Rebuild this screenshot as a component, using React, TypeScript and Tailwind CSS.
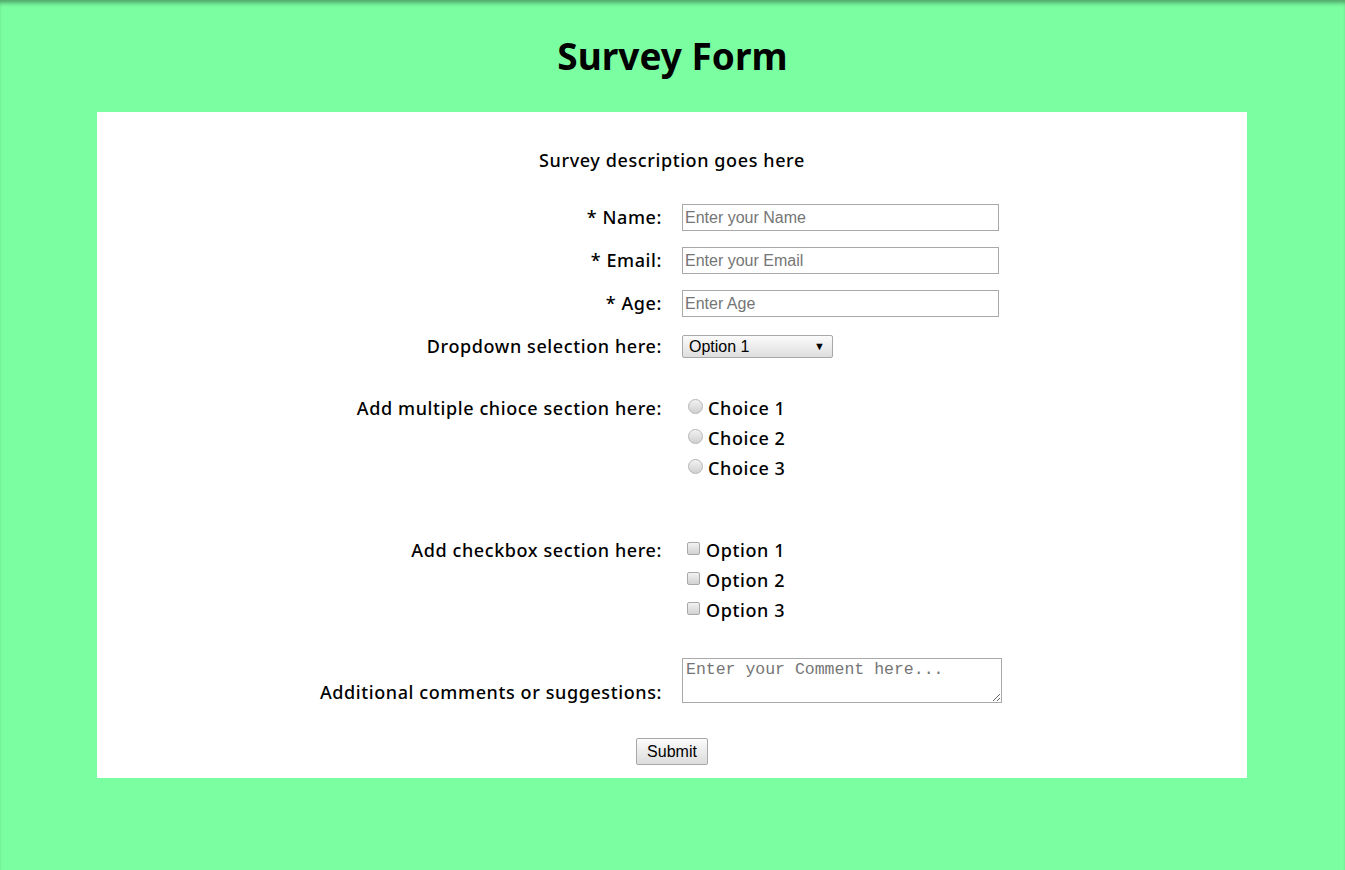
const labelCls = 'w-1/2 pr-[10px] text-right'
const fieldCls = 'w-1/2 pl-[10px] flex flex-col items-start'
const textInput =
  'w-[317px] h-[27px] border border-[#a9a9a9] px-[2px] text-[16px] text-black placeholder:text-[#757575] outline-none tracking-normal font-normal'

const Row = ({ label, children }: { label: string; children: React.ReactNode }) => (
  <div className="flex items-center">
    <label className={labelCls + ' leading-[27px]'}>{label}</label>
    <div className={fieldCls}>{children}</div>
  </div>
)

const Radio = ({ text }: { text: string }) => (
  <label className="flex items-center h-[30px]">
    <span className="ml-[6px] mr-[5px] -mt-[4px] w-[15px] h-[15px] rounded-full border border-[#b5b5b5] bg-gradient-to-b from-[#f2f2f2] to-[#d0d0d0]" />
    {text}
  </label>
)

const Check = ({ text }: { text: string }) => (
  <label className="flex items-center h-[30px]">
    <span className="ml-[5px] mr-[6px] -mt-[4px] w-[13px] h-[13px] rounded-[2px] border border-[#a9a9a9] bg-gradient-to-b from-[#f2f2f2] to-[#d2d2d2]" />
    {text}
  </label>
)

export default function App() {
  return (
    <div
      className="min-h-[870px] bg-[#7bfea1] shadow-[inset_0_5px_4px_-2px_rgba(0,0,0,0.35)] pt-[34px] text-black"
      style={{ fontFamily: '"Noto Sans", sans-serif' }}
    >
      <h1 className="text-center text-[37px] font-bold leading-[44px]">Survey Form</h1>

      <form className="ml-[97px] w-[1150px] mt-[34px] bg-white pt-[34px] pb-[13px] text-[18px] font-medium tracking-[0.6px]">
        <p className="text-center leading-[28px]">Survey description goes here</p>

        <div className="mt-[30px] flex flex-col gap-[16px]">
          <Row label="* Name:">
            <input className={textInput} style={{ fontFamily: '"Liberation Sans", sans-serif' }} placeholder="Enter your Name" />
          </Row>
          <Row label="* Email:">
            <input className={textInput} style={{ fontFamily: '"Liberation Sans", sans-serif' }} placeholder="Enter your Email" />
          </Row>
          <Row label="* Age:">
            <input className={textInput} style={{ fontFamily: '"Liberation Sans", sans-serif' }} placeholder="Enter Age" />
          </Row>
        </div>

        <div className="mt-[16px]">
          <Row label="Dropdown selection here:">
            <div className="relative w-[151px] h-[23px] border border-[#a9a9a9] rounded-[2px] bg-gradient-to-b from-[#fbfbfb] to-[#dedede] font-['Liberation_Sans',sans-serif] text-[16px] font-normal tracking-normal leading-[21px] pl-[6px]">
              Option 1
              <span className="absolute right-[7px] top-0 text-[11px]">▼</span>
            </div>
          </Row>
        </div>

        <div className="mt-[33px] flex">
          <div className={labelCls + ' leading-[30px]'}>Add multiple chioce section here:</div>
          <div className={fieldCls}>
            <Radio text="Choice 1" />
            <Radio text="Choice 2" />
            <Radio text="Choice 3" />
          </div>
        </div>

        <div className="mt-[52px] flex">
          <div className={labelCls + ' leading-[30px]'}>Add checkbox section here:</div>
          <div className={fieldCls}>
            <Check text="Option 1" />
            <Check text="Option 2" />
            <Check text="Option 3" />
          </div>
        </div>

        <div className="mt-[33px] flex items-end">
          <div className={labelCls + ' leading-[22px]'}>Additional comments or suggestions:</div>
          <div className={fieldCls}>
            <textarea
              className="block w-[320px] h-[45px] border border-[#a9a9a9] px-[3px] py-[1px] text-[16.5px] font-normal tracking-normal leading-[20px] placeholder:text-[#757575] outline-none"
              style={{ fontFamily: '"Liberation Mono", monospace' }}
              placeholder="Enter your Comment here..."
            />
          </div>
        </div>

        <div className="mt-[35px] flex justify-center">
          <button
            type="button"
            className="h-[27px] px-[10px] border border-[#a9a9a9] rounded-[2px] bg-gradient-to-b from-[#fbfbfb] to-[#dcdcdc] text-[16px] font-normal tracking-normal"
            style={{ fontFamily: '"Liberation Sans", sans-serif' }}
          >
            Submit
          </button>
        </div>
      </form>
    </div>
  )
}
